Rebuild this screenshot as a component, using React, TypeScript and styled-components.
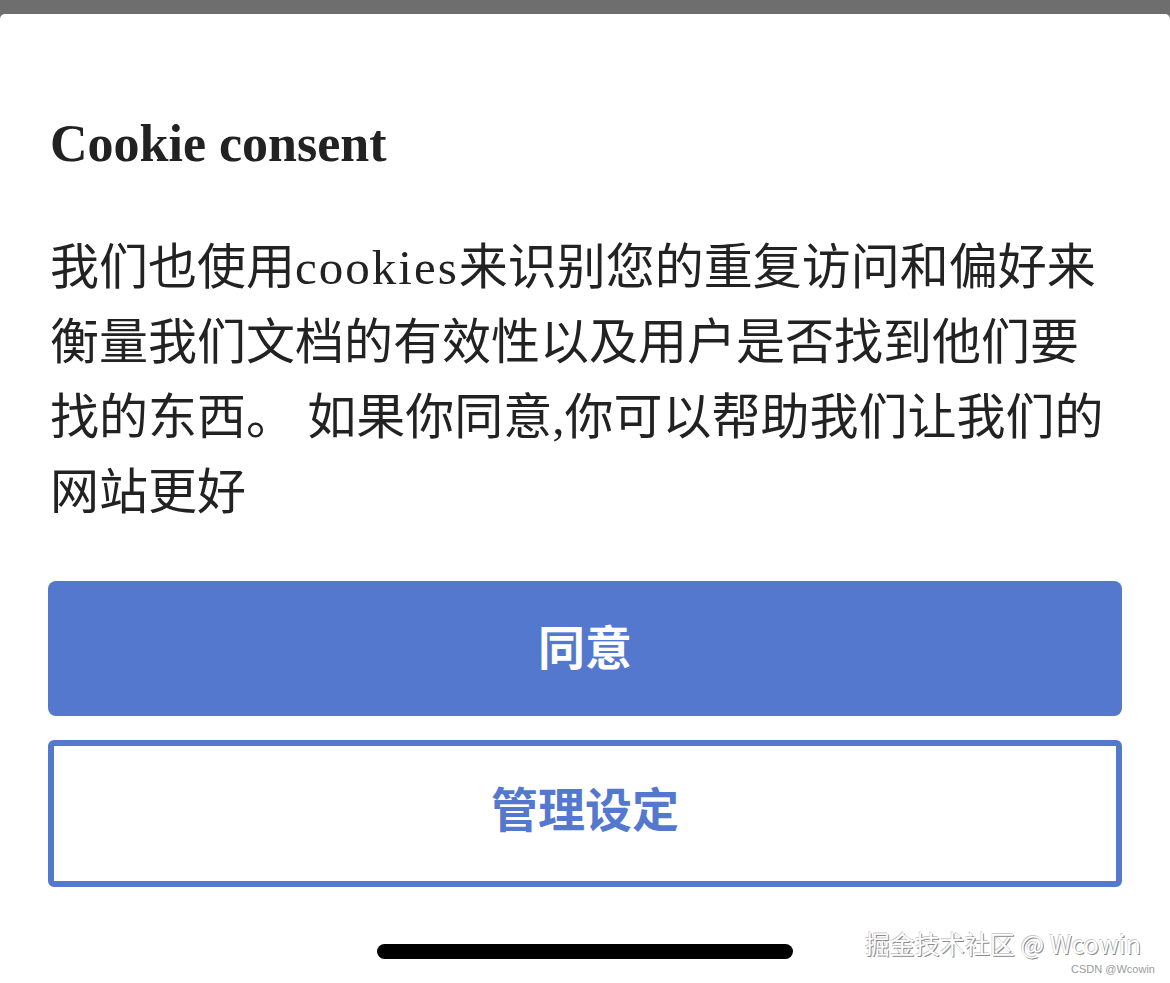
import React from "react";
import styled, { createGlobalStyle } from "styled-components";

const GlobalStyle = createGlobalStyle`
  html, body {
    margin: 0;
    padding: 0;
    background: #6e6e6e;
  }
  * { box-sizing: border-box; }
`;

const Backdrop = styled.div`
  width: 1170px;
  height: 983px;
  padding-top: 14px;
  background: #6e6e6e;
  overflow: hidden;
  position: relative;
`;

const Sheet = styled.section`
  height: 969px;
  background: #ffffff;
  border-radius: 5px 5px 0 0;
  padding: 99px 48px 0;
  display: flex;
  flex-direction: column;
`;

const Title = styled.h2`
  margin: 0;
  font-family: "Liberation Serif", "Noto Sans CJK SC", serif;
  font-weight: 700;
  font-size: 52px;
  line-height: 62px;
  color: #222222;
  padding-left: 2px;
`;

const Message = styled.p`
  margin: 55px 0 0;
  width: 1064px;
  padding-left: 2px;
  font-family: "Liberation Serif", "Noto Sans CJK SC", serif;
  font-size: 49px;
  line-height: 75px;
  color: #222222;
`;

const Latin = styled.span`
  letter-spacing: 2px;
`;

const Actions = styled.div`
  margin-top: 51px;
  display: flex;
  flex-direction: column;
  gap: 24px;
`;

const ActionButton = styled.button<{ $variant: "primary" | "outline" }>`
  width: 100%;
  height: ${(p) => (p.$variant === "primary" ? "135px" : "147px")};
  border-radius: ${(p) => (p.$variant === "primary" ? "8px" : "6px")};
  border: ${(p) => (p.$variant === "primary" ? "none" : "6px solid #5578cf")};
  background: ${(p) => (p.$variant === "primary" ? "#5578cf" : "#ffffff")};
  color: ${(p) => (p.$variant === "primary" ? "#ffffff" : "#5578cf")};
  font-family: "Noto Sans CJK SC", "Noto Sans", sans-serif;
  font-weight: 700;
  font-size: 47px;
  letter-spacing: 0;
  display: flex;
  align-items: center;
  justify-content: center;
  padding: 0 0 ${(p) => (p.$variant === "primary" ? "8px" : "14px")};
  cursor: pointer;
`;

const HomeArea = styled.div`
  flex: 1;
  display: flex;
  justify-content: center;
  padding-top: 57px;
`;

const HomeIndicator = styled.div`
  width: 416px;
  height: 15px;
  border-radius: 8px;
  background: #000000;
`;

const Watermark = styled.div`
  position: absolute;
  right: 29px;
  bottom: 25px;
  font-family: "Noto Sans CJK SC", "Noto Sans", sans-serif;
  font-size: 25px;
  line-height: 30px;
  color: #ffffff;
  text-shadow: 1px 1px 0 #8a8a8a, -0.6px -0.6px 0 #c8c8c8;
  white-space: nowrap;
`;

const SourceMark = styled.div`
  position: absolute;
  right: 15px;
  bottom: 7px;
  font-family: "Liberation Sans", Arial, sans-serif;
  font-size: 11px;
  line-height: 13px;
  color: #9a9a9a;
  white-space: nowrap;
`;

export default function App() {
  return (
    <>
      <GlobalStyle />
      <Backdrop>
        <Sheet>
          <Title>Cookie consent</Title>
          <Message>
            我们也使用<Latin>cookies</Latin>来识别您的重复访问和偏好来衡量我们文档的有效性以及用户是否找到他们要找的东西。 如果你同意,你可以帮助我们让我们的网站更好
          </Message>
          <Actions>
            <ActionButton $variant="primary">同意</ActionButton>
            <ActionButton $variant="outline">管理设定</ActionButton>
          </Actions>
          <HomeArea>
            <HomeIndicator />
          </HomeArea>
        </Sheet>
        <Watermark>掘金技术社区 @ Wcowin</Watermark>
        <SourceMark>CSDN @Wcowin</SourceMark>
      </Backdrop>
    </>
  );
}
